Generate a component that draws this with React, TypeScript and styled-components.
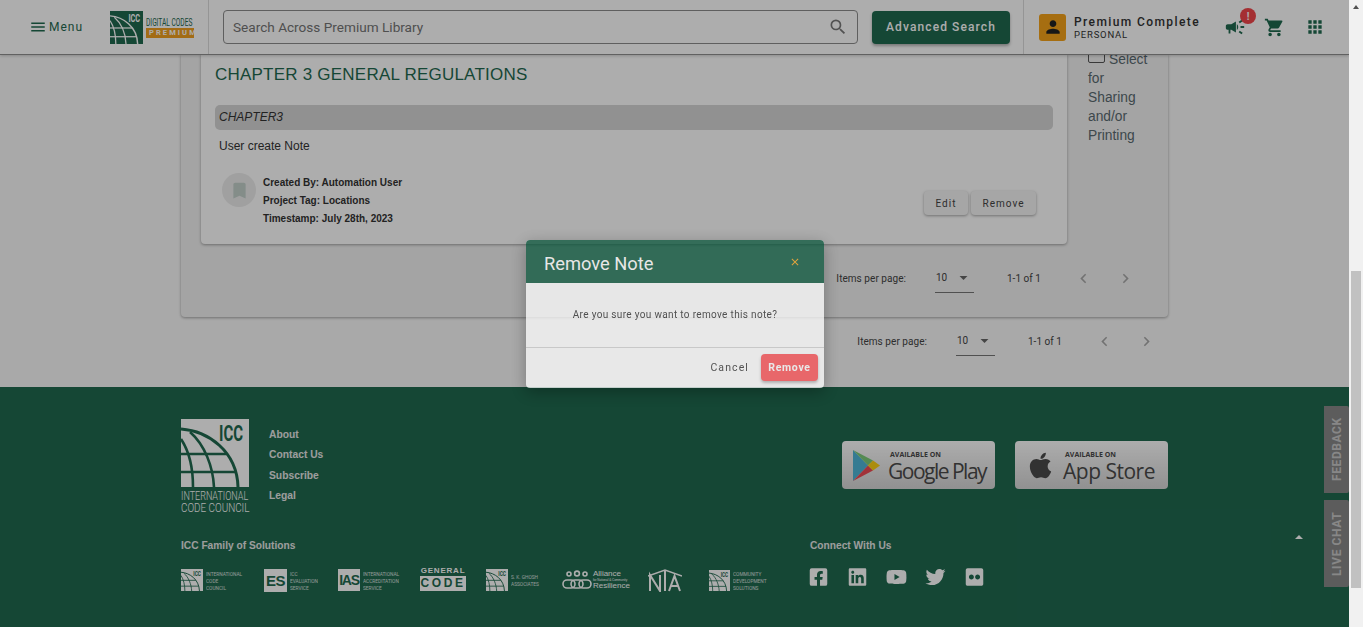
import styled, { createGlobalStyle } from 'styled-components';
import { MdMenu, MdSearch, MdPerson, MdCampaign, MdShoppingCart, MdApps, MdBookmark, MdChevronLeft, MdChevronRight, MdArrowDropDown, MdClose } from 'react-icons/md';
import { FaApple, FaFacebookSquare, FaLinkedin, FaYoutube, FaTwitter, FaFlickr } from 'react-icons/fa';

const GREEN = '#1f694f';
const FOOT_TXT = '#fff';

const Global = createGlobalStyle`
  html, body { margin: 0; padding: 0; height: 100%; overflow: hidden; }
  body { font-family: Roboto, "Liberation Sans", sans-serif; background: #f1f1f1; }
  * { box-sizing: border-box; }
`;

const Shell = styled.div`
  display: flex;
  width: 1363px;
  height: 627px;
  overflow: hidden;
`;

const Viewport = styled.div`
  position: relative;
  width: 1349px;
  height: 627px;
  overflow: hidden;
  background: #fafafa;
  display: flex;
  flex-direction: column;
`;

const Scrollbar = styled.div`
  width: 14px;
  background: #f1f1f1;
  display: flex;
  flex-direction: column;
  align-items: center;
`;

const ScrollArrow = styled.div`
  margin-top: 5px;
  width: 0;
  height: 0;
  border-left: 3.5px solid transparent;
  border-right: 3.5px solid transparent;
  border-bottom: 4px solid #505050;
`;

const ScrollThumb = styled.div`
  margin-top: 262px;
  width: 10px;
  height: 317px;
  background: #c1c1c1;
`;

const Header = styled.header`
  height: 55px;
  flex: none;
  display: flex;
  align-items: stretch;
  background: #fff;
  border-bottom: 1px solid #8f8f8f;
  box-shadow: 0 1px 3px rgba(0, 0, 0, 0.2);
  position: relative;
  z-index: 2;
`;

const BrandCell = styled.div`
  width: 209px;
  flex: none;
  border-right: 1px solid #dcdcdc;
  display: flex;
  align-items: center;
  padding-left: 29px;
`;

const MenuBtn = styled.div`
  flex: none;
  display: flex;
  align-items: center;
  gap: 2px;
  width: 81px;
  color: ${GREEN};
  font-size: 12px;
  letter-spacing: 1px;
  svg { font-size: 18px; }
`;

const LogoWord = styled.div`
  display: flex;
  flex-direction: column;
  align-items: flex-start;
  margin-left: 3px;
  margin-top: 1px;
  width: 49px;
`;

const LogoTop = styled.span`
  width: max-content;
  font-size: 11px;
  line-height: 11px;
  color: ${GREEN};
  transform: scaleX(0.6);
  transform-origin: left;
  white-space: nowrap;
`;

const LogoPremium = styled.span`
  width: 48px;
  height: 10px;
  background: #f0a01f;
  color: #fff;
  font-size: 7.5px;
  line-height: 10px;
  font-weight: 700;
  letter-spacing: 2.1px;
  padding-left: 3px;
  white-space: nowrap;
`;

const SearchCell = styled.div`
  flex: 1;
  display: flex;
  align-items: center;
  padding: 0 13px 0 14px;
  gap: 14px;
  border-right: 1px solid #dcdcdc;
`;

const SearchBox = styled.div`
  width: 635px;
  height: 34px;
  border: 1px solid #8c8c8c;
  border-radius: 4px;
  display: flex;
  align-items: center;
  justify-content: space-between;
  padding: 0 9px;
  color: #757575;
  font-size: 13.6px;
  svg { font-size: 20px; color: #7a7a7a; }
`;

const AdvancedBtn = styled.div`
  width: 138px;
  height: 33px;
  border-radius: 4px;
  background: ${GREEN};
  color: #fff;
  font-size: 12px;
  font-weight: 500;
  letter-spacing: 1.1px;
  display: flex;
  align-items: center;
  justify-content: center;
  box-shadow: 0 2px 3px rgba(0, 0, 0, 0.3);
`;

const AccountCell = styled.div`
  width: 326px;
  flex: none;
  display: flex;
  align-items: center;
  padding-left: 15px;
`;

const Avatar = styled.div`
  width: 27px;
  height: 27px;
  border-radius: 3px;
  background: #f5a31a;
  color: #222;
  display: flex;
  align-items: center;
  justify-content: center;
  font-size: 20px;
`;

const Plan = styled.div`
  margin-left: 8px;
  width: 150px;
  display: flex;
  flex-direction: column;
  color: #333;
`;

const PlanName = styled.span`
  font-size: 12px;
  line-height: 14px;
  font-weight: 500;
  letter-spacing: 1.4px;
`;

const PlanKind = styled.span`
  font-size: 9.5px;
  line-height: 11px;
  letter-spacing: 0.8px;
`;

const HeadIcon = styled.div<{ $size: number; $gap: number }>`
  position: relative;
  display: flex;
  color: ${GREEN};
  font-size: ${(p) => p.$size}px;
  margin-right: ${(p) => p.$gap}px;
`;

const Badge = styled.span`
  position: absolute;
  top: -8px;
  left: 16px;
  width: 16px;
  height: 16px;
  border-radius: 50%;
  background: #f2464b;
  color: #fff;
  font-size: 10px;
  font-weight: 700;
  display: flex;
  align-items: center;
  justify-content: center;
`;

const Main = styled.main`
  height: 333px;
  margin-top: -1px;
  margin-left: 181px;
  width: 987px;
  flex: none;
  display: flex;
  flex-direction: column;
`;

const Panel = styled.section`
  height: 263px;
  flex: none;
  background: #f2f2f2;
  border-radius: 0 0 4px 4px;
  box-shadow: 0 1px 3px rgba(0, 0, 0, 0.35);
  padding: 0 0 0 20px;
  display: flex;
  flex-direction: column;
`;

const PanelTop = styled.div`
  display: flex;
`;

const NoteCard = styled.article`
  width: 866px;
  height: 190px;
  flex: none;
  background: #fff;
  border-radius: 0 0 4px 4px;
  box-shadow: 0 1px 3px rgba(0, 0, 0, 0.35);
  padding: 10px 14px 0;
  display: flex;
  flex-direction: column;
`;

const ChapterTitle = styled.h2`
  margin: 0;
  font-family: "Liberation Sans", sans-serif;
  font-size: 17px;
  line-height: 22px;
  font-weight: 400;
  letter-spacing: 0.22px;
  color: ${GREEN};
`;

const ChapterBar = styled.div`
  margin-top: 19px;
  height: 25px;
  border-radius: 5px;
  background: #d6d6d6;
  padding-left: 4px;
  font-family: "Liberation Sans", sans-serif;
  font-style: italic;
  font-size: 12px;
  line-height: 24px;
  color: #333;
`;

const NoteText = styled.p`
  margin: 8px 0 0 4px;
  font-family: "Liberation Sans", sans-serif;
  font-size: 12px;
  line-height: 16px;
  color: #333;
`;

const NoteFoot = styled.div`
  margin-top: 12px;
  display: flex;
  align-items: flex-start;
  padding-left: 7px;
`;

const Marker = styled.div`
  margin-top: 7px;
  width: 34px;
  height: 34px;
  border-radius: 50%;
  background: #ececec;
  color: #c3d0cb;
  display: flex;
  align-items: center;
  justify-content: center;
  font-size: 21px;
`;

const Meta = styled.div`
  margin-left: 7px;
  padding-top: 8px;
  font-family: "Liberation Sans", sans-serif;
  font-size: 10px;
  line-height: 18px;
  font-weight: 700;
  color: #333;
  display: flex;
  flex-direction: column;
  white-space: nowrap;
`;

const Actions = styled.div`
  margin-left: auto;
  margin-top: 25px;
  margin-right: 17px;
  display: flex;
  gap: 3px;
`;

const SmallBtn = styled.div<{ $w: number }>`
  width: ${(p) => p.$w}px;
  height: 24px;
  border-radius: 4px;
  background: #f5f5f5;
  box-shadow: 0 1px 3px rgba(0, 0, 0, 0.35);
  color: #444;
  font-size: 10px;
  letter-spacing: 1px;
  display: flex;
  align-items: center;
  justify-content: center;
`;

const SelectCol = styled.div`
  width: 64px;
  margin-left: 21px;
  margin-top: -4px;
  font-family: "Liberation Sans", sans-serif;
  font-size: 13.8px;
  line-height: 19px;
  color: #5a6a70;
`;

const Check = styled.span`
  display: inline-block;
  width: 17px;
  height: 13px;
  border: 1px solid #555;
  border-radius: 2px;
  margin-right: 4px;
  vertical-align: 1px;
`;

const Pager = styled.div<{ $mr: number; $h: number }>`
  height: ${(p) => p.$h}px;
  display: flex;
  align-items: center;
  justify-content: flex-end;
  padding-right: ${(p) => p.$mr}px;
  font-size: 10px;
  color: #444;
`;

const PagerLabel = styled.span`
  margin-right: 29px;
  letter-spacing: 0.05px;
`;

const PagerSelect = styled.div`
  width: 39px;
  height: 29px;
  border-bottom: 1px solid #777;
  display: flex;
  align-items: center;
  justify-content: space-between;
  padding-left: 1px;
  svg { font-size: 19px; color: #666; margin-right: 1px; }
`;

const PagerRange = styled.span`
  margin-left: 33px;
  width: 55px;
`;

const PagerArrow = styled.div`
  width: 42px;
  display: flex;
  justify-content: center;
  color: #a8a8a8;
  font-size: 19px;
`;

const Footer = styled.footer`
  height: 240px;
  flex: none;
  background: ${GREEN};
  padding: 32px 181px 0;
  color: ${FOOT_TXT};
  width: 1349px;
`;

const FootTop = styled.div`
  width: 987px;
  display: flex;
  align-items: flex-start;
`;

const FootBrand = styled.div`
  width: 68px;
  flex: none;
  display: flex;
  flex-direction: column;
`;

const CouncilLines = styled.div`
  margin-top: 3px;
  display: flex;
  flex-direction: column;
  align-items: flex-start;
`;

const CouncilName = styled.span<{ $sx: number }>`
  width: max-content;
  font-weight: 300;
  font-size: 12.5px;
  line-height: 12px;
  white-space: nowrap;
  transform: scaleX(${(p) => p.$sx});
  transform-origin: left;
`;

const FootLinks = styled.nav`
  margin-left: 20px;
  margin-top: 6px;
  display: flex;
  flex-direction: column;
  font-family: "Liberation Sans", sans-serif;
  font-size: 10.3px;
  font-weight: 700;
  line-height: 20.4px;
  color: #e8e8e8;
`;

const Stores = styled.div`
  margin-left: auto;
  margin-top: 22px;
  display: flex;
  gap: 20px;
`;

const StoreBadge = styled.div`
  width: 153px;
  height: 48px;
  border-radius: 4px;
  background: linear-gradient(#ffffff, #d6d6d6);
  color: #4a4a4a;
  display: flex;
  align-items: center;
  padding-left: 11px;
  gap: 8px;
`;

const StoreText = styled.div`
  display: flex;
  flex-direction: column;
  margin-top: 3px;
`;

const StoreSmall = styled.span`
  font-family: "Open Sans", sans-serif;
  font-size: 7px;
  line-height: 9px;
  font-weight: 700;
  margin-left: 2px;
`;

const StoreBig = styled.span<{ $ls: number }>`
  font-family: "Open Sans", sans-serif;
  font-size: 21px;
  line-height: 24px;
  letter-spacing: ${(p) => p.$ls}px;
  white-space: nowrap;
`;

const FootBottom = styled.div`
  width: 987px;
  margin-top: 25px;
  display: flex;
`;

const FamilyCol = styled.div`
  width: 629px;
  flex: none;
`;

const ColTitle = styled.h4`
  margin: 0 0 15px;
  font-family: "Liberation Sans", sans-serif;
  font-size: 10.2px;
  line-height: 14px;
  font-weight: 700;
  color: #e8e8e8;
`;

const FamilyRow = styled.div`
  display: flex;
  align-items: center;
  gap: 21px;
  height: 24px;
`;

const FamilyItem = styled.div`
  display: flex;
  align-items: center;
  gap: 3px;
`;

const Tiny = styled.div<{ $w: number }>`
  width: ${(p) => p.$w}px;
  font-size: 6px;
  line-height: 7px;
  opacity: 0.8;
  display: flex;
  flex-direction: column;
  align-items: flex-start;
  span {
    width: max-content;
    white-space: nowrap;
    transform: scaleX(0.8);
    transform-origin: left;
  }
`;

const EsMark = styled.span`
  background: #fff;
  color: ${GREEN};
  width: 23px;
  height: 23px;
  flex: none;
  display: flex;
  align-items: center;
  justify-content: center;
  font-family: "Liberation Sans", sans-serif;
  font-weight: 700;
  font-size: 15px;
  letter-spacing: -0.5px;
`;

const IasMark = styled.span`
  background: #fff;
  color: ${GREEN};
  width: 22px;
  height: 22px;
  flex: none;
  display: flex;
  align-items: center;
  justify-content: center;
  font-family: "Liberation Sans", sans-serif;
  font-weight: 700;
  font-size: 14px;
  letter-spacing: -1.2px;
`;

const GeneralCode = styled.div`
  width: 46px;
  margin-right: -1px;
  display: flex;
  flex-direction: column;
  align-items: center;
  font-family: "Liberation Sans", sans-serif;
  font-weight: 700;
  margin-top: -3px;
`;

const GeneralTop = styled.span`
  font-size: 8px;
  line-height: 10px;
  letter-spacing: 0.8px;
`;

const GeneralBottom = styled.span`
  width: 46px;
  height: 15px;
  background: #fff;
  color: ${GREEN};
  font-size: 12px;
  line-height: 15px;
  letter-spacing: 2.6px;
  text-align: center;
`;

const AllianceText = styled.div`
  width: 36px;
  margin-left: -2px;
  font-family: "Liberation Sans", sans-serif;
  font-size: 8px;
  line-height: 8px;
  display: flex;
  flex-direction: column;
  white-space: nowrap;
  small { font-size: 3px; line-height: 4px; }
`;

const NtaMark = styled.svg`
  flex: none;
  margin: 0 6px 0 -2px;
`;

const ConnectCol = styled.div`
  display: flex;
  flex-direction: column;
`;

const SocialRow = styled.div`
  display: flex;
  align-items: center;
  font-size: 20px;
  margin: -1px 0 0 -2px;
  gap: 18px;
  svg { display: block; width: 21px; }
`;

const SideTab = styled.div<{ $top: number }>`
  position: absolute;
  right: 0;
  top: ${(p) => p.$top}px;
  width: 25px;
  height: 87px;
  background: #888;
  border-radius: 2px 0 0 2px;
  color: #c8c8c8;
  font-size: 12px;
  font-weight: 700;
  letter-spacing: 0.6px;
  writing-mode: vertical-rl;
  transform: rotate(180deg);
  display: flex;
  align-items: center;
  justify-content: center;
  white-space: nowrap;
`;

const UpArrow = styled.div`
  position: absolute;
  left: 1295px;
  top: 535px;
  width: 0;
  height: 0;
  border-left: 4.5px solid transparent;
  border-right: 4.5px solid transparent;
  border-bottom: 4px solid #fff;
`;

const Overlay = styled.div`
  position: absolute;
  inset: 0;
  background: rgba(0, 0, 0, 0.32);
  z-index: 5;
`;

const Modal = styled.div`
  position: absolute;
  left: 526px;
  top: 240px;
  width: 298px;
  height: 148px;
  z-index: 6;
  opacity: 0.74;
  background: #fff;
  border-radius: 4px;
  overflow: hidden;
  box-shadow: 0 4px 16px rgba(0, 0, 0, 0.4);
  display: flex;
  flex-direction: column;
`;

const ModalHead = styled.div`
  height: 43px;
  background: #0a573c;
  color: #fff;
  display: flex;
  align-items: center;
  justify-content: space-between;
  padding: 3px 23px 0 18px;
  font-size: 18.3px;
  svg { color: #f5a31a; font-size: 12px; margin-top: -3px; }
`;

const ModalBody = styled.div`
  height: 65px;
  border-bottom: 1px solid #d4d4d4;
  display: flex;
  align-items: center;
  justify-content: center;
  font-size: 10px;
  letter-spacing: 0.33px;
  color: #333;
  padding-bottom: 1px;
`;

const ModalFoot = styled.div`
  flex: 1;
  display: flex;
  align-items: center;
  justify-content: flex-end;
  padding: 0 6px 2px 0;
  gap: 12px;
`;

const CancelBtn = styled.span`
  font-size: 10.5px;
  letter-spacing: 1.1px;
  color: #333;
`;

const RemoveBtn = styled.div`
  width: 57px;
  height: 27px;
  border-radius: 4px;
  background: #ff5155;
  color: #fff;
  font-size: 10.5px;
  font-weight: 700;
  letter-spacing: 0.7px;
  display: flex;
  align-items: center;
  justify-content: center;
  box-shadow: 0 2px 3px rgba(0, 0, 0, 0.3);
`;

function GlobeMark({ size, bg, ink }: { size: number; bg: string; ink: string }) {
  return (
    <svg width={size} height={size} viewBox="0 0 68 68" style={{ display: 'block', flex: 'none' }}>
      <rect width="68" height="68" fill={bg} />
      <g fill="none" stroke={ink} strokeWidth="2.6">
        <path d="M0 10 C27 12 56 32 57 68" strokeWidth="3" />
        <path d="M0 20 C8 32 12 50 12 68" />
        <path d="M9 13 C24 26 32 48 33 68" />
        <path d="M0 35 H46" />
        <path d="M0 53 H55" />
      </g>
      <text x="38" y="22" fill={ink} fontFamily="Roboto, sans-serif" fontWeight="700" fontSize="22" textLength="24" lengthAdjust="spacingAndGlyphs">
        ICC
      </text>
    </svg>
  );
}

function Pagination({ mr, h }: { mr: number; h: number }) {
  return (
    <Pager $mr={mr} $h={h}>
      <PagerLabel>Items per page:</PagerLabel>
      <PagerSelect>
        10
        <MdArrowDropDown />
      </PagerSelect>
      <PagerRange>1-1 of 1</PagerRange>
      <PagerArrow>
        <MdChevronLeft />
      </PagerArrow>
      <PagerArrow>
        <MdChevronRight />
      </PagerArrow>
    </Pager>
  );
}

function PlayIcon() {
  return (
    <svg width="27" height="31" viewBox="0 0 27 31" style={{ flex: 'none' }}>
      <path d="M0 0 L15 15.5 L0 31 Z" fill="#4fb6d8" />
      <path d="M0 0 L20 10.5 L15 15.5 Z" fill="#7ccc7a" />
      <path d="M0 31 L20 20.5 L15 15.5 Z" fill="#ee4b55" />
      <path d="M20 10.5 L27 15.5 L20 20.5 L15 15.5 Z" fill="#fdd012" />
    </svg>
  );
}

function ChainIcon() {
  return (
    <svg width="30" height="20" viewBox="0 0 30 20" fill="none" stroke="#fff" strokeWidth="1.6" style={{ flex: 'none' }}>
      <circle cx="7" cy="4" r="2" />
      <circle cx="15" cy="3.5" r="2.4" />
      <circle cx="23" cy="4" r="2" />
      <rect x="1" y="10" width="12" height="8" rx="4" />
      <rect x="9" y="10" width="12" height="8" rx="4" />
      <rect x="17" y="10" width="12" height="8" rx="4" />
    </svg>
  );
}

function NtaIcon() {
  return (
    <NtaMark width="34" height="24" viewBox="0 0 34 24" fill="none" stroke="#fff">
      <path d="M0 8 L17 2 L34 8" strokeWidth="1.5" />
      <path d="M2 23 V7 L12 23 V7" strokeWidth="2" />
      <path d="M17 3 V23" strokeWidth="2" />
      <path d="M21 23 L26.5 8 L32 23 M23 18 H30" strokeWidth="2" />
    </NtaMark>
  );
}

export default function App() {
  return (
    <Shell>
      <Global />
      <Viewport>
        <Header>
          <BrandCell>
            <MenuBtn>
              <MdMenu />
              Menu
            </MenuBtn>
            <GlobeMark size={33} bg={GREEN} ink="#fff" />
            <LogoWord>
              <LogoTop>DIGITAL CODES</LogoTop>
              <LogoPremium>PREMIUM</LogoPremium>
            </LogoWord>
          </BrandCell>
          <SearchCell>
            <SearchBox>
              Search Across Premium Library
              <MdSearch />
            </SearchBox>
            <AdvancedBtn>Advanced Search</AdvancedBtn>
          </SearchCell>
          <AccountCell>
            <Avatar>
              <MdPerson />
            </Avatar>
            <Plan>
              <PlanName>Premium Complete</PlanName>
              <PlanKind>PERSONAL</PlanKind>
            </Plan>
            <HeadIcon $size={22} $gap={18}>
              <MdCampaign />
              <Badge>!</Badge>
            </HeadIcon>
            <HeadIcon $size={21} $gap={20}>
              <MdShoppingCart />
            </HeadIcon>
            <HeadIcon $size={20} $gap={0}>
              <MdApps />
            </HeadIcon>
          </AccountCell>
        </Header>

        <Main>
          <Panel>
            <PanelTop>
              <NoteCard>
                <ChapterTitle>CHAPTER 3 GENERAL REGULATIONS</ChapterTitle>
                <ChapterBar>CHAPTER3</ChapterBar>
                <NoteText>User create Note</NoteText>
                <NoteFoot>
                  <Marker>
                    <MdBookmark />
                  </Marker>
                  <Meta>
                    <span>Created By: Automation User</span>
                    <span>Project Tag: Locations</span>
                    <span>Timestamp: July 28th, 2023</span>
                  </Meta>
                  <Actions>
                    <SmallBtn $w={44}>Edit</SmallBtn>
                    <SmallBtn $w={65}>Remove</SmallBtn>
                  </Actions>
                </NoteFoot>
              </NoteCard>
              <SelectCol>
                <Check />
                Select for Sharing and/or Printing
              </SelectCol>
            </PanelTop>
            <Pagination mr={22} h={68} />
          </Panel>
          <Pagination mr={1} h={48} />
        </Main>

        <Footer>
          <FootTop>
            <FootBrand>
              <GlobeMark size={68} bg="#fff" ink={GREEN} />
              <CouncilLines>
                <CouncilName $sx={0.72}>INTERNATIONAL</CouncilName>
                <CouncilName $sx={0.79}>CODE COUNCIL</CouncilName>
              </CouncilLines>
            </FootBrand>
            <FootLinks>
              <span>About</span>
              <span>Contact Us</span>
              <span>Subscribe</span>
              <span>Legal</span>
            </FootLinks>
            <Stores>
              <StoreBadge>
                <PlayIcon />
                <StoreText>
                  <StoreSmall>AVAILABLE ON</StoreSmall>
                  <StoreBig $ls={-1.5}>Google Play</StoreBig>
                </StoreText>
              </StoreBadge>
              <StoreBadge>
                <FaApple size={29} style={{ flex: 'none' }} />
                <StoreText>
                  <StoreSmall>AVAILABLE ON</StoreSmall>
                  <StoreBig $ls={-0.5}>App Store</StoreBig>
                </StoreText>
              </StoreBadge>
            </Stores>
          </FootTop>
          <FootBottom>
            <FamilyCol>
              <ColTitle>ICC Family of Solutions</ColTitle>
              <FamilyRow>
                <FamilyItem>
                  <GlobeMark size={22} bg="#fff" ink={GREEN} />
                  <Tiny $w={37}>
                    <span>INTERNATIONAL</span>
                    <span>CODE</span>
                    <span>COUNCIL</span>
                  </Tiny>
                </FamilyItem>
                <FamilyItem>
                  <EsMark>ES</EsMark>
                  <Tiny $w={27}>
                    <span>ICC</span>
                    <span>EVALUATION</span>
                    <span>SERVICE</span>
                  </Tiny>
                </FamilyItem>
                <FamilyItem>
                  <IasMark>IAS</IasMark>
                  <Tiny $w={36}>
                    <span>INTERNATIONAL</span>
                    <span>ACCREDITATION</span>
                    <span>SERVICE</span>
                  </Tiny>
                </FamilyItem>
                <GeneralCode>
                  <GeneralTop>GENERAL</GeneralTop>
                  <GeneralBottom>CODE</GeneralBottom>
                </GeneralCode>
                <FamilyItem>
                  <GlobeMark size={22} bg="#fff" ink={GREEN} />
                  <Tiny $w={30}>
                    <span>S. K. GHOSH</span>
                    <span>ASSOCIATES</span>
                  </Tiny>
                </FamilyItem>
                <FamilyItem>
                  <ChainIcon />
                  <AllianceText>
                    <span>Alliance</span>
                    <small>for National &amp; Community</small>
                    <span>Resilience</span>
                  </AllianceText>
                </FamilyItem>
                <NtaIcon />
                <FamilyItem>
                  <GlobeMark size={21} bg="#fff" ink={GREEN} />
                  <Tiny $w={32}>
                    <span>COMMUNITY</span>
                    <span>DEVELOPMENT</span>
                    <span>SOLUTIONS</span>
                  </Tiny>
                </FamilyItem>
              </FamilyRow>
            </FamilyCol>
            <ConnectCol>
              <ColTitle>Connect With Us</ColTitle>
              <SocialRow>
                <FaFacebookSquare />
                <FaLinkedin />
                <FaYoutube />
                <FaTwitter />
                <FaFlickr />
              </SocialRow>
            </ConnectCol>
          </FootBottom>
        </Footer>

        <SideTab $top={406}>FEEDBACK</SideTab>
        <SideTab $top={500}>LIVE CHAT</SideTab>
        <UpArrow />
        <Overlay />
        <Modal>
          <ModalHead>
            Remove Note
            <MdClose />
          </ModalHead>
          <ModalBody>Are you sure you want to remove this note?</ModalBody>
          <ModalFoot>
            <CancelBtn>Cancel</CancelBtn>
            <RemoveBtn>Remove</RemoveBtn>
          </ModalFoot>
        </Modal>
      </Viewport>
      <Scrollbar>
        <ScrollArrow />
        <ScrollThumb />
      </Scrollbar>
    </Shell>
  );
}
